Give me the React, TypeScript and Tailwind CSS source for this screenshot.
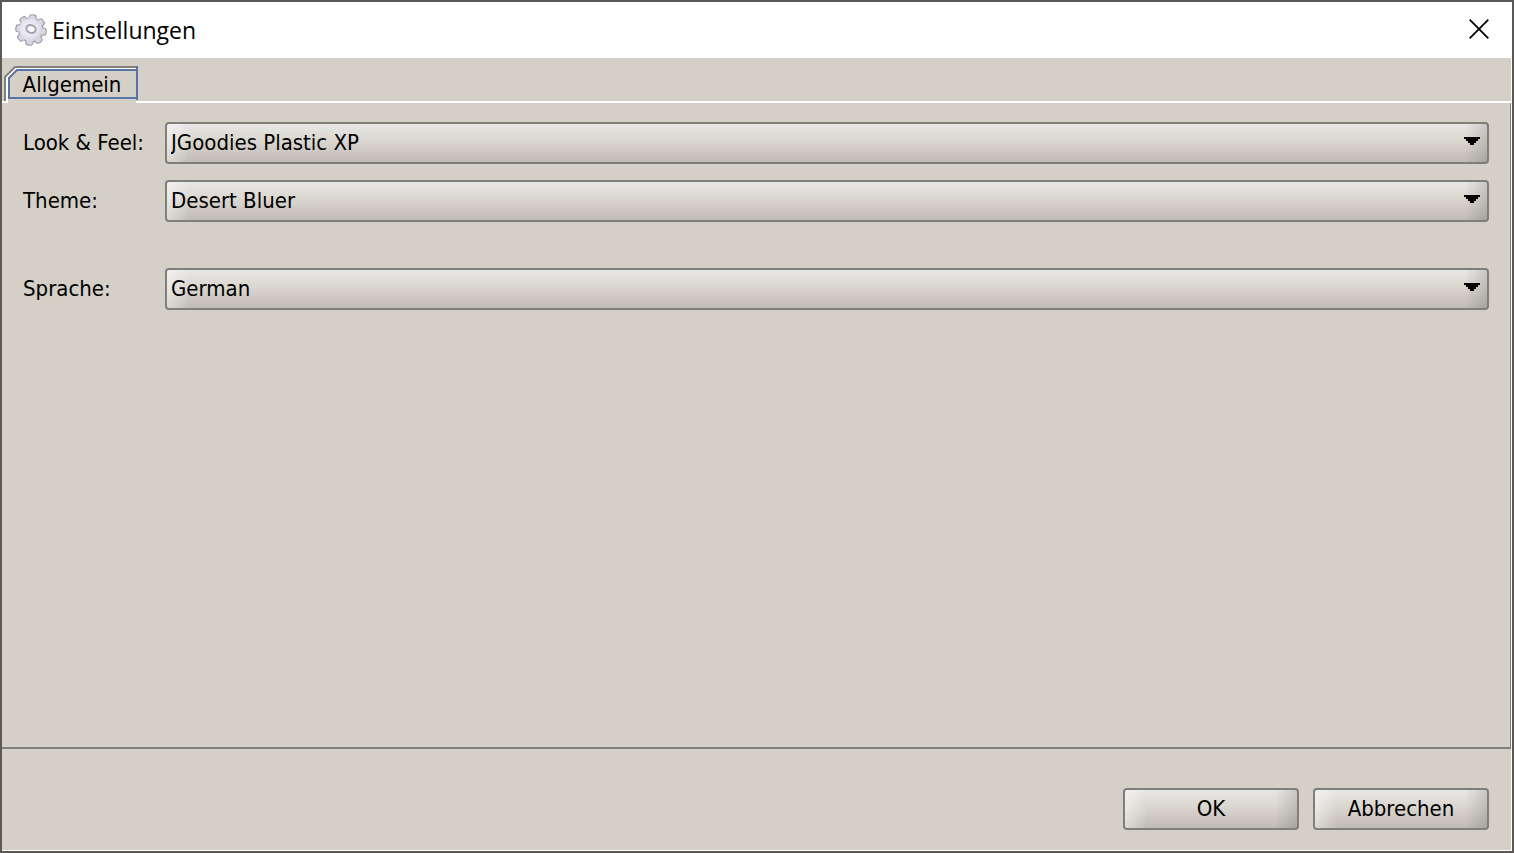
import { useId, useState } from 'react';

const surface =
  'rounded-[4px] border-2 border-[#7f7e7a] bg-[linear-gradient(90deg,rgba(255,255,255,0.5)_0px,rgba(255,255,255,0)_24px,rgba(0,0,0,0)_calc(100%_-_24px),rgba(0,0,0,0.14)_100%),linear-gradient(180deg,#eae9e7_0%,#d8d4cd_50%,#bdb8b1_100%)] bg-origin-border text-black';

function GearIcon() {
  const teeth = [0, 45, 90, 135, 180, 225, 270, 315];
  return (
    <svg viewBox="0 0 32 32" className="size-8 shrink-0" aria-hidden="true">
      <defs>
        <linearGradient id="gear-edge" x1="4" y1="4" x2="28" y2="28" gradientUnits="userSpaceOnUse">
          <stop offset="0" stopColor="#bcbcc4" />
          <stop offset="1" stopColor="#85858f" />
        </linearGradient>
        <radialGradient id="gear-fill" cx="0.45" cy="0.45" r="0.6">
          <stop offset="0" stopColor="#f4f4fb" />
          <stop offset="0.6" stopColor="#e6e6f1" />
          <stop offset="1" stopColor="#cfcfdc" />
        </radialGradient>
        <filter id="gear-soft" x="-10%" y="-10%" width="120%" height="120%">
          <feGaussianBlur stdDeviation="0.5" />
        </filter>
      </defs>
      <g filter="url(#gear-soft)">
        <g fill="url(#gear-edge)">
          <circle cx="16" cy="16" r="12.6" />
        </g>
        <g fill="#9c9ca7">
          {teeth.map((a) => (
            <rect key={a} x="12" y="0.2" width="8" height="9" rx="2.8" transform={`rotate(${a + 8} 16 16)`} />
          ))}
        </g>
        <g fill="#d8d8e4">
          {teeth.map((a) => (
            <rect key={a} x="12.8" y="1.3" width="6.2" height="8" rx="2.2" transform={`rotate(${a + 8} 16 16)`} />
          ))}
        </g>
        <circle cx="15.8" cy="15.8" r="11.6" fill="url(#gear-fill)" />
        <ellipse cx="16" cy="15" rx="4.8" ry="3.8" fill="#f7f7fc" stroke="#a3a3b0" strokeWidth="2" transform="rotate(20 16 15)" />
      </g>
    </svg>
  );
}

function TabFrame() {
  return (
    <svg viewBox="0 0 134 37" className="pointer-events-none absolute inset-0 h-full w-full" fill="none" aria-hidden="true">
      <path d="M1 35V11L11 1H134" stroke="#807f7c" strokeWidth="2" />
      <path d="M3 36V12L12 3H132" stroke="#ffffff" strokeWidth="2" />
      <path d="M0 36H4" stroke="#ffffff" strokeWidth="2" />
      <path d="M5 32V12L13 4H133V32Z" stroke="#5b74a6" strokeWidth="2" />
      <path d="M133 0V34" stroke="#5b74a6" strokeWidth="2" />
      <path d="M132 36H134" stroke="#ffffff" strokeWidth="2" />
    </svg>
  );
}

function Field({ label, options, className = '' }: { label: string; options: string[]; className?: string }) {
  const id = useId();
  const [value, setValue] = useState(options[0]);
  return (
    <div className={`flex items-center ${className}`}>
      <label htmlFor={id} className="w-[142px] shrink-0">
        {label}
      </label>
      <div className="relative flex-1">
        <select
          id={id}
          value={value}
          onChange={(e) => setValue(e.target.value)}
          className={`block h-[42px] w-full appearance-none pr-10 pl-1 ${surface}`}
        >
          {options.map((o) => (
            <option key={o}>{o}</option>
          ))}
        </select>
        <svg
          viewBox="0 0 16 8"
          className="pointer-events-none absolute top-[15px] right-[9px] h-2 w-4"
          shapeRendering="crispEdges"
          aria-hidden="true"
        >
          <path d="M0 0H16V2H14V4H12V6H10V8H6V6H4V4H2V2H0Z" fill="#000" />
        </svg>
      </div>
    </div>
  );
}

export default function App() {
  return (
    <div className="flex min-h-screen flex-col border-2 border-[#5b5957] bg-[#d4d0c8] font-['DejaVu_Sans_Condensed','DejaVu_Sans',sans-serif] text-[22px] leading-7 text-black">
      <header className="flex h-14 items-center bg-white pr-[19px] pl-[13px]">
        <GearIcon />
        <h1 className="ml-[5px] flex-1 font-['Open_Sans',sans-serif] text-[23px] leading-8">Einstellungen</h1>
        <button type="button" aria-label="Schließen" className="flex size-7 items-center justify-center pb-0.5">
          <svg viewBox="0 0 20 20" className="size-5" aria-hidden="true">
            <path d="M0.7 0.7L19.3 19.3M19.3 0.7L0.7 19.3" stroke="#000" strokeWidth="1.8" />
          </svg>
        </button>
      </header>

      <div className="flex flex-1 flex-col border-r border-b border-white">
        <div role="tablist" className="flex items-end pt-2">
          <span className="w-[2px] self-end border-b-2 border-white" />
          <button type="button" role="tab" aria-selected="true" className="relative h-[37px] w-[134px] pl-0.5 text-center">
            <TabFrame />
            Allgemein
          </button>
          <span className="flex-1 self-end border-b-2 border-white" />
        </div>

        <main role="tabpanel" className="flex-1 border-r border-b-2 border-[#807f7c] pt-[19px] pr-[21px] pl-[21px]">
          <Field label="Look & Feel:" options={['JGoodies Plastic XP']} />
          <Field label="Theme:" options={['Desert Bluer']} className="mt-4" />
          <Field label="Sprache:" options={['German', 'English']} className="mt-[46px]" />
        </main>

        <footer className="flex justify-end gap-[14px] pt-[39px] pr-[22px] pb-5">
          <button type="button" className={`h-[42px] w-[176px] ${surface}`}>
            OK
          </button>
          <button type="button" className={`h-[42px] w-[176px] ${surface}`}>
            Abbrechen
          </button>
        </footer>
      </div>
    </div>
  );
}
